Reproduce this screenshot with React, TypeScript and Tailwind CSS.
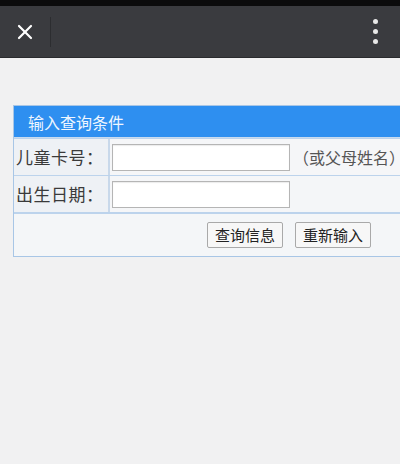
import { X } from 'lucide-react';

const font = { fontFamily: '"Noto Sans CJK SC", "Noto Sans", sans-serif' };

const QueryPage = () => {
  const rows = [
    { label: '儿童卡号：', hint: '（或父母姓名）' },
    { label: '出生日期：', hint: '' },
  ];

  return (
    <div className="w-[400px] h-[464px] overflow-hidden bg-[#f1f1f2]" style={font}>
      {/* Status + toolbar */}
      <div className="h-[6px] bg-[#0b0b0c]" />
      <div className="h-[52px] bg-[#3a3b3f] border-b border-[#2a2b2e] flex items-center">
        <div className="w-[50px] flex justify-center">
          <X className="w-[24px] h-[24px] text-white" strokeWidth={2.2} />
        </div>
        <div className="w-px h-[30px] bg-[#2c2d30]" />
        <div className="flex-1" />
        <div className="w-[50px] flex flex-col items-center gap-[5px]">
          <span className="w-[5px] h-[5px] rounded-full bg-[#e8e8e8]" />
          <span className="w-[5px] h-[5px] rounded-full bg-[#e8e8e8]" />
          <span className="w-[5px] h-[5px] rounded-full bg-[#e8e8e8]" />
        </div>
      </div>

      {/* Query table */}
      <div className="mt-[47px] ml-[13px] w-[430px] border border-[#a8c6e6] bg-[#f4f6f8]">
        <div className="h-[32px] bg-[#2e8ff0] border-b border-[#c9dbef] flex items-center pl-[14px] text-[16px] text-[#eef6ff]">
          输入查询条件
        </div>
        {rows.map((r) => (
          <div key={r.label} className="flex h-[37px] border-t border-[#bcd3ec]">
            <div className="w-[96px] shrink-0 bg-[#eef1f5] border-r-2 border-[#c8d8ea] flex items-center pl-[2px] text-[17px] text-[#3a3a3a] whitespace-nowrap tracking-[0.5px]">
              {r.label}
            </div>
            <div className="flex items-center pl-[2px] bg-[#f5f6f8]">
              <div className="w-[178px] h-[27px] bg-white border border-[#b5b5b5] shadow-[inset_0_1px_1px_rgba(0,0,0,0.08)]" />
              {r.hint && (
                <span className="ml-[3px] text-[16px] text-[#555] whitespace-nowrap">{r.hint}</span>
              )}
            </div>
          </div>
        ))}
        <div className="h-[44px] border-t-2 border-[#bcd3ec] flex items-center pl-[193px] gap-[12px]">
          <button className="w-[76px] h-[26px] bg-[#f7f7f7] border border-[#a9a9a9] rounded-[2px] text-[15px] text-[#222]">
            查询信息
          </button>
          <button className="w-[76px] h-[26px] bg-[#f7f7f7] border border-[#a9a9a9] rounded-[2px] text-[15px] text-[#222]">
            重新输入
          </button>
        </div>
      </div>
    </div>
  );
};

export default function App() {
  return <QueryPage />;
}
